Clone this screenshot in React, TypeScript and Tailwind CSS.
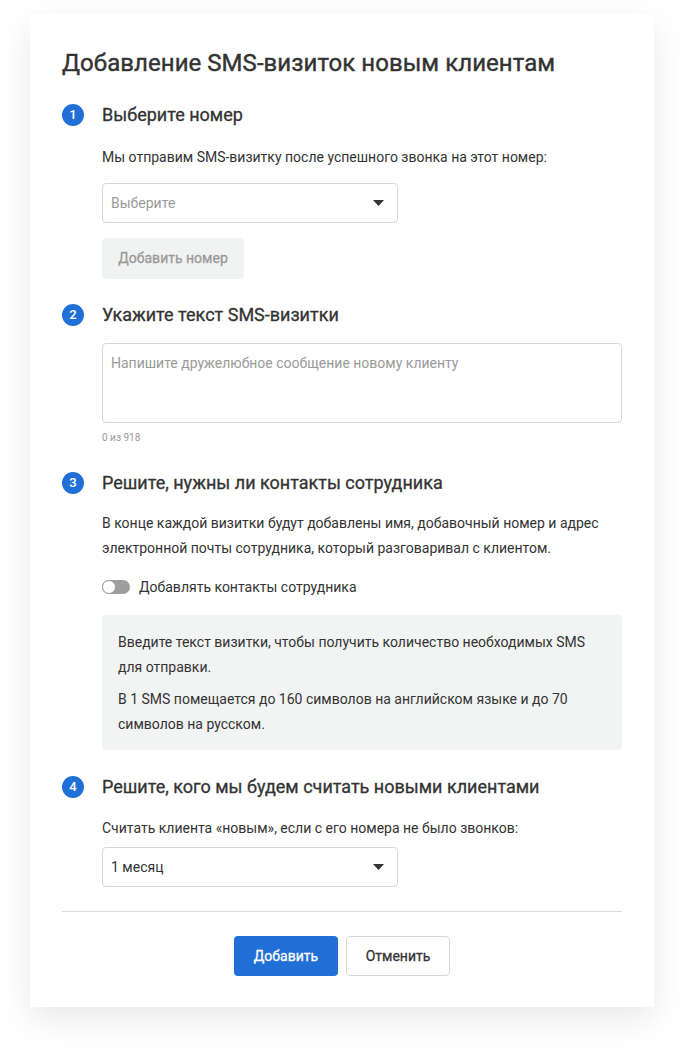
import { useState } from 'react';

function StepHeader({ n, title, className = '' }: { n: number; title: string; className?: string }) {
  return (
    <div className={`flex items-center h-6 ${className}`}>
      <span className="w-[22px] h-[22px] rounded-full bg-[#1f6fd6] text-white text-[13px] font-medium flex items-center justify-center">
        {n}
      </span>
      <h2 className="ml-[18px] text-[18px] leading-6 font-normal text-[#333] [-webkit-text-stroke:0.3px_#333]">{title}</h2>
    </div>
  );
}

function Caret() {
  return (
    <svg width="11" height="6" viewBox="0 0 11 6" className="shrink-0">
      <path d="M0 0h11L5.5 6z" fill="#333" />
    </svg>
  );
}

function SelectBox({ value, placeholder, className = '' }: { value?: string; placeholder?: string; className?: string }) {
  return (
    <div
      className={`w-[296px] h-10 border border-[#d6d6d6] rounded-[4px] flex items-center justify-between pl-2 pr-[13px] text-[14px] ${className}`}
    >
      <span className={value ? 'text-[#333]' : 'text-[#9a9a9a]'}>{value ?? placeholder}</span>
      <Caret />
    </div>
  );
}

export default function App() {
  const [withContacts, setWithContacts] = useState(false);
  const [text, setText] = useState('');

  return (
    <div className="min-h-screen bg-white pt-[14px] pb-[46px]" style={{ fontFamily: 'Roboto, "Noto Sans", sans-serif' }}>
      <div className="mx-[30px] bg-white shadow-[0_12px_32px_rgba(0,0,0,0.09)] px-8 pt-[33px] pb-[31px]">
        <h1 className="text-[24px] leading-8 font-normal text-[#333] tracking-[0.05px] [-webkit-text-stroke:0.4px_#333]">
          Добавление SMS-визиток новым клиентам
        </h1>

        <StepHeader n={1} title="Выберите номер" className="mt-6" />
        <div className="pl-10">
          <p className="mt-[18px] text-[14px] leading-6 text-[#333]">
            Мы отправим SMS-визитку после успешного звонка на этот номер:
          </p>
          <SelectBox placeholder="Выберите" className="mt-[14px]" />
          <button className="mt-[15px] h-[41px] w-[142px] rounded-[4px] bg-[#f1f2f2] text-[#999] text-[14px] font-normal [-webkit-text-stroke:0.3px_#999]">
            Добавить номер
          </button>
        </div>

        <StepHeader n={2} title="Укажите текст SMS-визитки" className="mt-6" />
        <div className="pl-10">
          <textarea
            value={text}
            onChange={(e) => setText(e.target.value)}
            placeholder="Напишите дружелюбное сообщение новому клиенту"
            className="mt-4 block w-full h-20 resize-none border border-[#d6d6d6] rounded-[4px] px-2 py-[9px] text-[14px] leading-5 text-[#333] placeholder:text-[#9a9a9a] outline-none"
          />
          <p className="mt-2 text-[10px] leading-[14px] text-[#999]">{text.length} из 918</p>
        </div>

        <StepHeader n={3} title="Решите, нужны ли контакты сотрудника" className="mt-[26px]" />
        <div className="pl-10">
          <p className="mt-4 text-[14px] leading-[25px] text-[#333]">
            В конце каждой визитки будут добавлены имя, добавочный номер и адрес электронной почты сотрудника, который
            разговаривал с клиентом.
          </p>
          <label className="mt-4 flex items-center h-5 cursor-pointer">
            <button
              onClick={() => setWithContacts(!withContacts)}
              className={`relative w-[28px] h-[14px] rounded-full ${withContacts ? 'bg-[#1f6fd6]' : 'bg-[#9e9e9e]'}`}
            >
              <span
                className={`absolute top-0 w-[14px] h-[14px] rounded-full bg-white border border-[#9e9e9e] ${
                  withContacts ? 'left-[14px]' : 'left-0'
                }`}
              />
            </button>
            <span className="ml-[9px] text-[14px] text-[#333]">Добавлять контакты сотрудника</span>
          </label>
          <div className="mt-[18px] bg-[#f2f3f3] rounded-[4px] pl-4 pr-4 pt-[15px] pb-[13px] text-[14px] leading-[25px] text-[#333]">
            <p>Введите текст визитки, чтобы получить количество необходимых SMS для отправки.</p>
            <p className="mt-[7px]">В 1 SMS помещается до 160 символов на английском языке и до 70 символов на русском.</p>
          </div>
        </div>

        <StepHeader n={4} title="Решите, кого мы будем считать новыми клиентами" className="mt-[25px]" />
        <div className="pl-10">
          <p className="mt-[17px] text-[14px] leading-6 text-[#333]">
            Считать клиента «новым», если с его номера не было звонков:
          </p>
          <SelectBox value="1 месяц" className="mt-[7px]" />
        </div>

        <div className="mt-6 h-px bg-[#dcdcdc]" />

        <div className="mt-6 flex justify-center gap-2">
          <button className="h-10 w-[104px] rounded-[4px] bg-[#1f6fd6] text-white text-[14px] font-normal [-webkit-text-stroke:0.3px_#fff]">
            Добавить
          </button>
          <button className="h-10 w-[104px] rounded-[4px] bg-white border border-[#d6d6d6] text-[#333] text-[14px] font-normal [-webkit-text-stroke:0.3px_#333]">
            Отменить
          </button>
        </div>
      </div>
    </div>
  );
}
